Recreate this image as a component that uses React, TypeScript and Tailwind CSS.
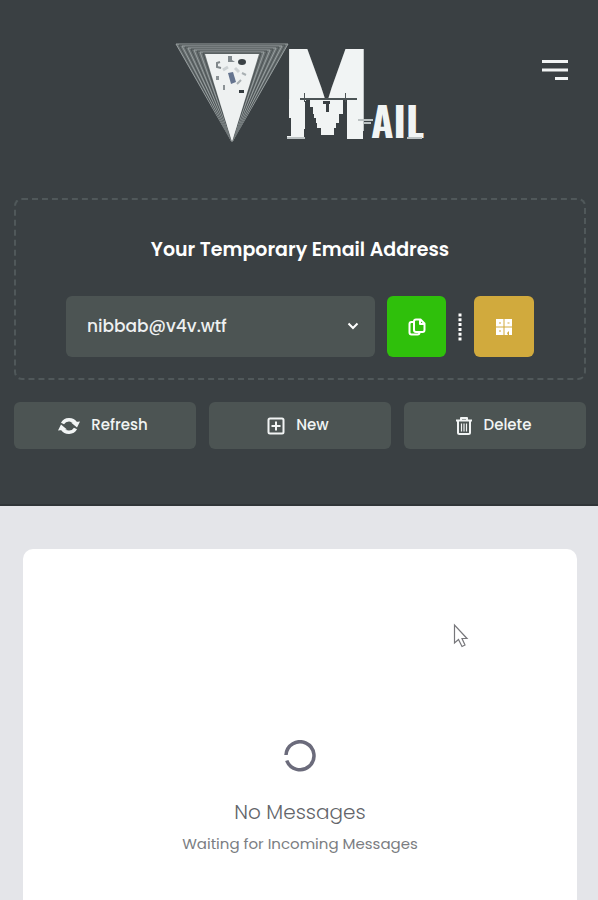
import { useState } from "react";
import clsx from "clsx";

const addresses = ["nibbab@v4v.wtf"];

function Logo() {
  // nested outlines around the prism, all meeting at the lower tip
  const rings = [0, 1, 2, 3, 4, 5, 6, 7, 8, 9];
  return (
    <svg viewBox="175 40 252 104" className="h-[104px] w-[252px] overflow-visible" role="img" aria-label="V Mail">
      <path d="M177 44H289L233 142Z" fill="#697071" />
      {rings.map((i) => (
        <path
          key={i}
          d={`M${177 + i * 3} ${44 + i}H${289 - i * 3}L233 142Z`}
          fill="none"
          stroke={i % 2 ? "#4c5355" : "#989fa0"}
          strokeWidth="1"
        />
      ))}
      <path d="M206 54H260L233 142Z" fill="#eef1f1" />
      <g>
        <path d="M229 73l5-1 3 10-5 2z" fill="#65748f" />
        <ellipse cx="243" cy="62" rx="4" ry="3" fill="#3a4145" />
        <path d="M229 56h4v4l3 2h-7z" fill="#81898d" />
        <path d="M221 62l-3 1v4l4 1" fill="none" stroke="#80878a" strokeWidth="2" />
        <path d="M217 76h3v4h-3zM224 85h2v5h-2z" fill="#8b9295" />
        <path d="M240 90h5v3h-5z" fill="#353c40" />
        <path d="M242 80l-4 4M243 73l4 2" fill="none" stroke="#a9b0b3" strokeWidth="2" />
        <path d="M224 70l5-3M236 68l4 4" fill="none" stroke="#ccd1d3" strokeWidth="3" />
      </g>

      <g fill="#f1f4f4" fontWeight="700">
        <text x="280" y="131" fontSize="111" fontFamily="'Noto Sans CJK SC', 'Liberation Sans', sans-serif">
          M
        </text>
        <text x="372" y="138" fontSize="41" fontFamily="'Oswald', 'Noto Sans CJK SC', sans-serif">
          AIL
        </text>
      </g>

      {/* glitch slices */}
      <g fill="#f1f4f4">
        <path d="M300 68h11l8 31h-19zM357 68h-13l-9 31h22z" />
        <path d="M290 99h17v37h-17zM288 136h17v3h-17zM348 100h16v39h-16z" />
        <path d="M311 100h33v14h-33zM315 114h25v9h-25zM318 122h19v6h-19zM322 127h13v8h-13z" />
      </g>
      <g fill="#3a4043">
        <path d="M289 118h3v18h-3zM306 101h5v28h-5zM305 129h7v10h-7zM311 107h3v32h-3zM314 118h3v21h-3zM317 128h5v11h-5z" />
        <path d="M344 102h3v14h-3zM341 116h7v9h-7zM338 124h10v15h-10zM335 129h4v10h-4zM322 135h13v4h-13zM327 102h3v10h-3zM324 101h7v3h-7z" />
      </g>
      <path d="M301 98h57v2h-57zM305 93h1v9h-1zM346 93h1v9h-1z" fill="#4c5456" />
      <path d="M288 138h18M359 120h15M364 123h8M408 138h15" stroke="#bcc2c3" strokeWidth="2" />
    </svg>
  );
}

function RefreshIcon() {
  return (
    <svg viewBox="0 0 22 18" className="h-[18px] w-[22px]" fill="none" aria-hidden="true">
      <path d="M4.500 6.500A7.500 7 0 0 1 17.500 6M17.500 11.500A7.500 7 0 0 1 4.500 12" stroke="currentColor" strokeWidth="3.500" />
      <path d="M13 5.500L22 4.500L19 10.500ZM9 12.500L0 13.500L3 7.500Z" fill="currentColor" />
    </svg>
  );
}

function PlusIcon() {
  return (
    <svg viewBox="0 0 18 18" className="size-[18px]" fill="none" stroke="currentColor" strokeWidth="2" aria-hidden="true">
      <rect x="1.500" y="1.500" width="15" height="15" rx="1.500" />
      <path d="M9 4.500v9M4.500 9h9" />
    </svg>
  );
}

function TrashIcon() {
  return (
    <svg viewBox="0 0 18 20" className="h-5 w-[18px]" fill="none" stroke="currentColor" aria-hidden="true">
      <path d="M1 4.500H17" strokeWidth="2" />
      <path d="M6 4V2H12V4" strokeWidth="2" strokeLinejoin="round" />
      <path d="M3 5V16.500Q3 18 4.500 18H13.500Q15 18 15 16.500V5" strokeWidth="2" />
      <path d="M6.500 7.500V15.500M9 7.500V15.500M11.500 7.500V15.500" strokeWidth="1.200" />
    </svg>
  );
}

function CopyIcon() {
  return (
    <svg viewBox="0 0 18 18" className="size-[18px]" fill="none" stroke="currentColor" strokeWidth="2" strokeLinejoin="round" aria-hidden="true">
      <path d="M8 1.500H12.500L16.500 5.500V12Q16.500 14 14.500 14H8Q6 14 6 12V3.500Q6 1.500 8 1.500Z" />
      <path d="M12 1.500V6H16.500" />
      <path d="M5.500 4H3.500Q1.500 4 1.500 6V14.500Q1.500 16.500 3.500 16.500H9.500Q11.500 16.500 11.500 14.500" />
    </svg>
  );
}

function QrIcon() {
  return (
    <svg viewBox="0 0 18 18" className="size-[18px]" aria-hidden="true">
      <path d="M1 1h7.500v7.500H1zM9.500 1H17v7.500H9.500zM1 9.500h7.500V17H1zM9.500 9.500H17V17H9.500z" fill="#fff" />
      <path d="M4 4.500h2v1H4zM12.500 4.500h2v1h-2zM4 12.500h2v1H4zM12 15l2-2v4h-1z" fill="#d1aa3d" />
    </svg>
  );
}

const actions = [
  { label: "Refresh", icon: RefreshIcon },
  { label: "New", icon: PlusIcon },
  { label: "Delete", icon: TrashIcon },
];

export default function App() {
  const [address, setAddress] = useState(addresses[0]);

  return (
    <div className="relative flex h-screen flex-col overflow-hidden bg-[#e4e5e9] font-['Poppins','Inter',sans-serif]">
      <header className="border-b-2 border-[#303538] bg-[#3a4043] pt-10 pr-3 pb-[55px] pl-3.5 text-white">
        <div className="grid grid-cols-[1fr_auto_1fr] items-start">
          <a href="#" className="col-start-2">
            <Logo />
          </a>
          <button type="button" aria-label="Menu" className="mt-[19px] mr-[17px] justify-self-end">
            <svg viewBox="0 0 28 22" className="h-[22px] w-7" stroke="#f1f4f4" strokeWidth="3" aria-hidden="true">
              <path d="M1 2.500H27M1 11H27M14 19.500H27" />
            </svg>
          </button>
        </div>

        <section className="mt-[54px] rounded-lg border-2 border-dashed border-[#50585a] px-[50px] pt-9 pb-[21px]">
          <h1 className="text-center text-[19px] leading-7 font-semibold">Your Temporary Email Address</h1>
          <div className="mt-8 flex items-center">
            <div className="relative min-w-0 flex-1">
              <select
                aria-label="Email address"
                value={address}
                onChange={(e) => setAddress(e.target.value)}
                className="h-[61px] w-full appearance-none rounded-md bg-[#4c5453] px-[21px] text-[17px] font-medium text-[#eef0f0]"
              >
                {addresses.map((a) => (
                  <option key={a}>{a}</option>
                ))}
              </select>
              <svg viewBox="0 0 12 8" className="pointer-events-none absolute top-[26px] right-4 h-2 w-3" fill="none" stroke="#fff" strokeWidth="2" aria-hidden="true">
                <path d="M1.500 1.500L6 6L10.500 1.500" />
              </svg>
            </div>
            <button type="button" aria-label="Copy address" className="ml-3 flex h-[61px] w-[59px] items-center justify-center rounded-md bg-[#2fc00b]">
              <CopyIcon />
            </button>
            <svg viewBox="0 0 4 28" className="mx-3 h-7 w-1" aria-hidden="true">
              <path d="M2 0.500V28" stroke="#fff" strokeWidth="3" strokeDasharray="3 1.800" />
            </svg>
            <button type="button" aria-label="Show QR code" className="flex h-[61px] w-[60px] items-center justify-center rounded-md bg-[#d1aa3d]">
              <QrIcon />
            </button>
          </div>
        </section>

        <div className="mt-[22px] grid grid-cols-3 gap-[13px]">
          {actions.map(({ label, icon: Icon }) => (
            <button
              key={label}
              type="button"
              className={clsx(
                "flex h-[47px] items-center justify-center gap-[11px] rounded-md bg-[#4c5453] pr-1",
                "text-[15px] font-medium text-[#f1f4f4]"
              )}
            >
              <Icon />
              {label}
            </button>
          ))}
        </div>
      </header>

      <main className="flex flex-1 flex-col pt-[43px] pr-[21px] pl-[23px]">
        <section className="flex flex-1 flex-col items-center rounded-t-[10px] bg-white pt-[191px] text-[#63656a]">
          <svg viewBox="0 0 32 32" className="size-8" fill="none" aria-hidden="true">
            <path d="M2 15A14 14 0 1 1 2.800 20.500" stroke="#6b6b7b" strokeWidth="3.500" />
          </svg>
          <h2 className="mt-[26px] text-xl leading-7 font-light">No Messages</h2>
          <p className="mt-1 text-[15px] leading-7 text-[#7b7d82]">Waiting for Incoming Messages</p>
        </section>
      </main>

      {/* pointer */}
      <svg viewBox="0 0 16 26" className="absolute top-[623px] left-[453px] h-[26px] w-4" aria-hidden="true">
        <path d="M1.500 2V20L5.500 16.500L9 23.500L12 22L9 15.500H14Z" fill="#fff" stroke="#77777b" strokeWidth="1.200" />
      </svg>
    </div>
  );
}
